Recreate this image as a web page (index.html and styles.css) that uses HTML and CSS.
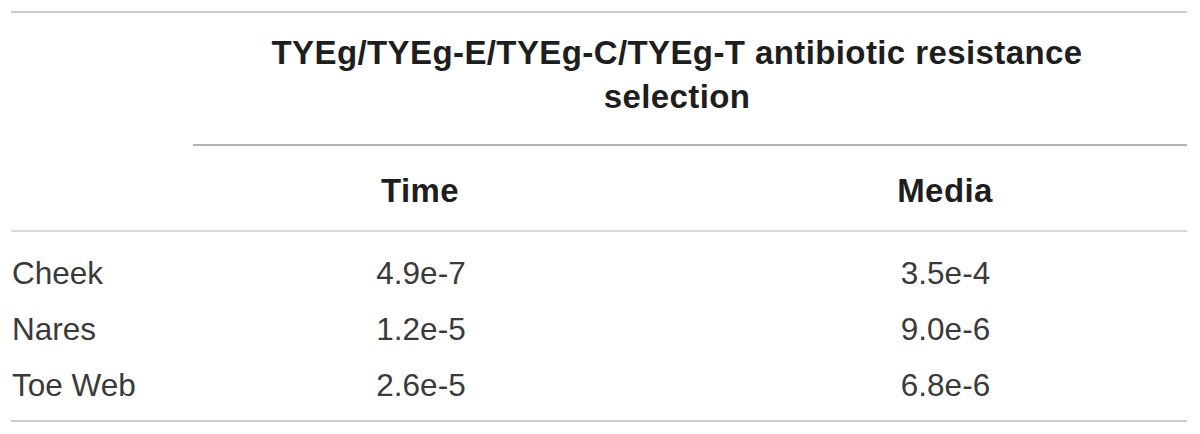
FILE: index.html
```html
<!DOCTYPE html>
<html lang="en">
<head>
<meta charset="utf-8">
<title>Antibiotic resistance selection</title>
<link rel="stylesheet" href="styles.css">
</head>
<body>
<div class="table">
  <div class="title-row">
    <div class="stub"></div>
    <div class="title">TYEg/TYEg-E/TYEg-C/TYEg-T antibiotic resistance selection</div>
  </div>
  <div class="sub-row">
    <div class="stub"></div>
    <div class="col2 head">Time</div>
    <div class="col3 head">Media</div>
  </div>
  <div class="body">
    <div class="row"><div class="stub">Cheek</div><div class="col2">4.9e-7</div><div class="col3">3.5e-4</div></div>
    <div class="row"><div class="stub">Nares</div><div class="col2">1.2e-5</div><div class="col3">9.0e-6</div></div>
    <div class="row"><div class="stub">Toe Web</div><div class="col2">2.6e-5</div><div class="col3">6.8e-6</div></div>
  </div>
</div>
</body>
</html>
```

FILE: styles.css
```css
body {
  margin: 0;
  background: #ffffff;
  font-family: "Liberation Sans", Arial, sans-serif;
  color: #333333;
}

.table {
  margin: 11px 0 0 11px;
  width: 1176px;
  border-top: 2px solid #cccccc;
  border-bottom: 2px solid #cccccc;
}

.title-row {
  display: flex;
}

.stub {
  width: 182px;
  flex: none;
}

.title {
  flex: 1;
  border-bottom: 2px solid #b3b3b3;
  text-align: center;
  font-weight: bold;
  font-size: 33px;
  letter-spacing: 0.4px;
  line-height: 44px;
  padding: 18px 85px 25px 59px;
  color: #1e1e1e;
}

.sub-row {
  display: flex;
  padding: 28px 0 22px;
  line-height: 34px;
  border-bottom: 2px solid #d6d6d6;
}

.head {
  font-weight: bold;
  font-size: 33px;
  letter-spacing: 0.4px;
  color: #1e1e1e;
}

.col2 {
  width: 454px;
  flex: none;
  text-align: center;
}

.col3 {
  flex: 1;
  padding-left: 56px;
  text-align: center;
}

.body {
  padding: 13px 0 7px;
}

.row {
  display: flex;
  font-size: 31.5px;
  line-height: 56px;
  color: #3a3a3a;
}

.row .stub {
  padding-left: 1px;
}
```
